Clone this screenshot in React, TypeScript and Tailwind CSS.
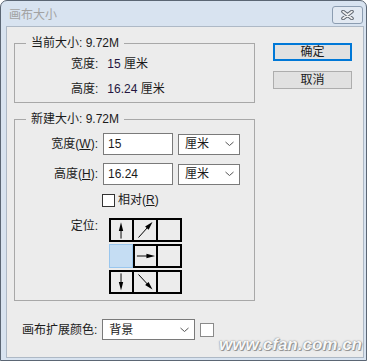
import type { ReactNode } from "react";

const font = "font-['Liberation_Sans','Noto_Sans_CJK_SC',sans-serif]";

function Chevron() {
  return (
    <svg width="9" height="6" viewBox="0 0 9 6" className="shrink-0">
      <polyline points="0.5,1 4.5,4.5 8.5,1" fill="none" stroke="#555" strokeWidth="1" />
    </svg>
  );
}

function Select({ value, width }: { value: string; width: string }) {
  return (
    <div
      className={`flex h-[21px] items-center justify-between border border-[#7a7a7a] bg-white pl-[6px] pr-[5px] ${width}`}
    >
      <span>{value}</span>
      <Chevron />
    </div>
  );
}

function Arrow({ dir }: { dir: "up" | "upright" | "right" | "down" | "downright" }) {
  return (
    <svg width="22" height="20" viewBox="0 0 22 20">
      {dir === "up" && (
        <>
          <line x1="10.5" y1="10" x2="10.5" y2="19" stroke="#000" strokeWidth="1" />
          <polygon points="10.5,2 8.2,11 12.8,11" fill="#000" />
        </>
      )}
      {dir === "down" && (
        <>
          <line x1="10.5" y1="1" x2="10.5" y2="10" stroke="#000" strokeWidth="1" />
          <polygon points="10.5,19 8.2,10 12.8,10" fill="#000" />
        </>
      )}
      {dir === "right" && (
        <>
          <line x1="2" y1="10" x2="13" y2="10" stroke="#000" strokeWidth="1" />
          <polygon points="21,10 12,7.7 12,12.3" fill="#000" />
        </>
      )}
      {dir === "upright" && (
        <>
          <line x1="4.5" y1="17.5" x2="13.5" y2="7.5" stroke="#000" strokeWidth="1" />
          <polygon points="18.5,2 14.6,9.8 11.1,6.6" fill="#000" />
        </>
      )}
      {dir === "downright" && (
        <>
          <line x1="4.5" y1="2.5" x2="13.5" y2="12.2" stroke="#000" strokeWidth="1" />
          <polygon points="18.5,17.5 14.6,9.9 11.1,13" fill="#000" />
        </>
      )}
    </svg>
  );
}

function Cell({ first, children }: { first?: boolean; children?: ReactNode }) {
  return (
    <div
      className={`flex h-[24px] items-center justify-center border-2 border-black ${
        first ? "w-[25px]" : "w-[24px] border-l-0"
      }`}
    >
      {children}
    </div>
  );
}

function Group({ title, children }: { title: string; children: ReactNode }) {
  return (
    <fieldset className="w-[241px] border border-[#a8a8a8]">
      <legend className="ml-[11px] px-[5px] leading-4">{title}</legend>
      {children}
    </fieldset>
  );
}

export default function App() {
  return (
    <div
      className={`flex h-[361px] w-[367px] flex-col rounded-t-[7px] border border-[#5b6674] bg-[#d8e3f0] text-[12px] text-[#1b1b1b] ${font}`}
    >
      {/* title bar */}
      <div className="flex h-[25px] items-center justify-between pl-[8px] pr-[3px]">
        <span className="mt-[3px] leading-4 text-[#a2a2a2]">画布大小</span>
        <div className="mt-[2px] flex h-[18px] w-[31px] items-center justify-center rounded-[3px] border border-[#8c9db1] bg-[#e2e9f2]">
          <svg width="13" height="10" viewBox="0 0 13 10">
            <path d="M2,1.5 L11,8.5 M11,1.5 L2,8.5" stroke="#5f6670" strokeWidth="3.6" strokeLinecap="round" />
            <path d="M2,1.5 L11,8.5 M11,1.5 L2,8.5" stroke="#f0f0f0" strokeWidth="1.6" strokeLinecap="round" />
          </svg>
        </div>
      </div>

      {/* client area */}
      <div className="relative mb-[2px] ml-[5px] mr-[2px] flex flex-1 flex-col border border-[#aeb9c6] bg-[#ececec]">
        <div className="flex">
          {/* left column */}
          <div className="flex flex-col pl-[7px] pt-[8px]">
            <Group title="当前大小: 9.72M">
              <div className="flex flex-col gap-[9px] pb-[5px] pl-[56px] pt-[5px] leading-4">
                <div>
                  宽度:<span className="ml-[9px] text-[#241640]">15</span> 厘米
                </div>
                <div>
                  高度:<span className="ml-[9px] text-[#241640]">16.24</span> 厘米
                </div>
              </div>
            </Group>

            <div className="mt-[8px]">
              <Group title="新建大小: 9.72M">
                <div className="flex flex-col pb-[6px] pt-[6px]">
                  <div className="flex items-center gap-[5px]">
                    <span className="w-[83px] text-right">
                      宽度(<span className="underline">W</span>):
                    </span>
                    <div className="flex h-[22px] w-[70px] items-center border border-[#7a7a7a] bg-white pl-[4px]">
                      15
                    </div>
                    <Select value="厘米" width="w-[62px]" />
                  </div>
                  <div className="mt-[8px] flex items-center gap-[5px]">
                    <span className="w-[83px] text-right">
                      高度(<span className="underline">H</span>):
                    </span>
                    <div className="flex h-[22px] w-[70px] items-center border border-[#7a7a7a] bg-white pl-[4px]">
                      16.24
                    </div>
                    <Select value="厘米" width="w-[62px]" />
                  </div>
                  <div className="ml-[87px] mt-[7px] flex items-center gap-[3px] leading-4">
                    <div className="h-[13px] w-[13px] border border-[#333] bg-white" />
                    <span>
                      相对(<span className="underline">R</span>)
                    </span>
                  </div>
                  <div className="mt-[10px] flex items-start">
                    <span className="w-[83px] text-right leading-4">定位:</span>
                    <div className="ml-[11px] flex flex-col gap-[2px]">
                      <div className="flex">
                        <Cell first>
                          <Arrow dir="up" />
                        </Cell>
                        <Cell>
                          <Arrow dir="upright" />
                        </Cell>
                        <Cell />
                      </div>
                      <div className="flex">
                        <div className="h-[24px] w-[24px] border border-[#99c6ee] bg-[#c5ddf3]" />
                        <div className="flex h-[24px] w-[25px] items-center justify-center border-2 border-black">
                          <Arrow dir="right" />
                        </div>
                        <Cell />
                      </div>
                      <div className="flex">
                        <Cell first>
                          <Arrow dir="down" />
                        </Cell>
                        <Cell>
                          <Arrow dir="downright" />
                        </Cell>
                        <Cell />
                      </div>
                    </div>
                  </div>
                </div>
              </Group>
            </div>
          </div>

          {/* right column */}
          <div className="ml-[18px] flex flex-col gap-[10px] pt-[16px]">
            <button className="flex h-[18px] w-[79px] items-center justify-center border-2 border-[#0078d7] bg-[#e1e1e1] leading-none">
              确定
            </button>
            <button className="flex h-[18px] w-[79px] items-center justify-center border border-[#adadad] bg-[#e1e1e1] leading-none">
              取消
            </button>
          </div>
        </div>

        {/* bottom row */}
        <div className="mt-[18px] flex items-center gap-[5px] pl-[15px]">
          <span className="leading-4">画布扩展颜色:</span>
          <Select value="背景" width="w-[93px]" />
          <div className="h-[14px] w-[14px] border border-[#8a8a8a] bg-white" />
        </div>

        <span className="absolute bottom-[0px] right-[1px] text-[17px] font-bold italic text-[#f8f8f8] [text-shadow:0_0_1px_#777,1px_1px_0_#999,0_0_2px_#aaa]">
          www.cfan.com.cn
        </span>
      </div>
    </div>
  );
}
